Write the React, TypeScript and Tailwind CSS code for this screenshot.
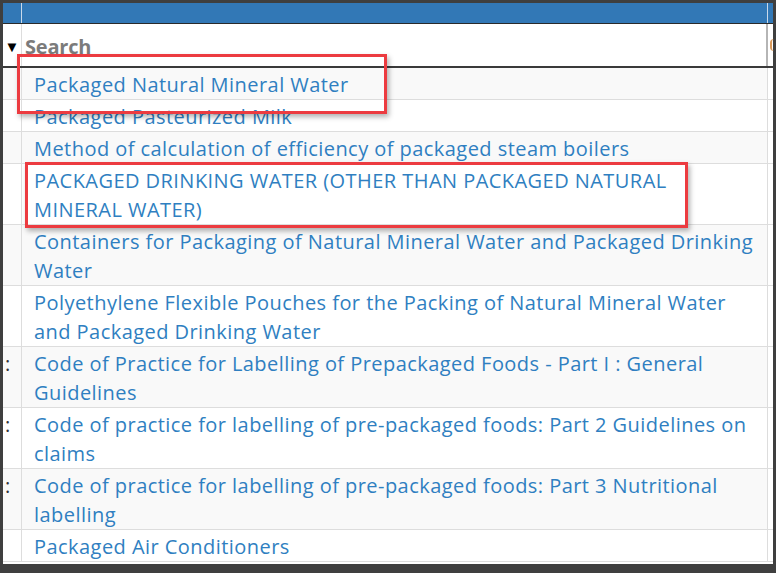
import React from "react";

type Row = { lines: string[]; left?: string };

const rows: Row[] = [
  { lines: ["Packaged Natural Mineral Water"] },
  { lines: ["Packaged Pasteurized Milk"] },
  { lines: ["Method of calculation of efficiency of packaged steam boilers"] },
  { lines: ["PACKAGED DRINKING WATER (OTHER THAN PACKAGED NATURAL", "MINERAL WATER)"] },
  { lines: ["Containers for Packaging of Natural Mineral Water and Packaged Drinking", "Water"] },
  { lines: ["Polyethylene Flexible Pouches for the Packing of Natural Mineral Water", "and Packaged Drinking Water"] },
  { lines: ["Code of Practice for Labelling of Prepackaged Foods - Part I : General", "Guidelines"], left: ":" },
  { lines: ["Code of practice for labelling of pre-packaged foods: Part 2 Guidelines on", "claims"], left: ":" },
  { lines: ["Code of practice for labelling of pre-packaged foods: Part 3 Nutritional", "labelling"], left: ":" },
  { lines: ["Packaged Air Conditioners"] },
];

export default function App() {
  return (
    <div
      className="relative w-[776px] h-[573px] bg-[#3f3f3f] pt-[3px] pl-[3px] pr-[3px] pb-[9px] overflow-hidden"
      style={{ fontFamily: "'Open Sans', Lato, sans-serif" }}
    >
      <div className="w-full h-full bg-white flex flex-col">
        {/* header */}
        <div className="flex h-[21px] bg-[#3278b6] border-b border-[#2a2a2a]">
          <div className="w-[19px] border-r border-[#c9d9ea]" />
          <div className="flex-1 border-r border-[#c9d9ea]" />
          <div className="w-[5px]" />
        </div>
        {/* search row */}
        <div className="flex h-[44px] bg-white border-b-2 border-[#3a3a3a]">
          <div className="w-[19px] border-r border-[#dddddd] flex items-center justify-center pt-[3px]">
            <span className="text-[15px] text-black leading-none">▼</span>
          </div>
          <div className="flex-1 border-r-2 border-[#b5b5b5] flex items-center pl-[3px] pt-[3px]">
            <span className="text-[20px] font-bold text-[#7b7b7b] leading-none tracking-[-0.2px]">Search</span>
          </div>
          <div className="w-[5px] relative">
            <span className="absolute left-[2px] top-[15px] w-[4px] h-[12px] border-l-2 border-[#d99a5b] rounded-l-full" />
          </div>
        </div>
        {/* body rows */}
        {rows.map((r, i) => (
          <div
            key={i}
            className={`flex border-b border-[#dddddd] ${i % 2 === 0 ? "bg-[#f9f9f9]" : "bg-white"}`}
          >
            <div className="w-[19px] border-r border-[#dddddd] text-[20px] leading-[29px] pt-[2px] pl-[2px] text-[#333]">
              {r.left ?? ""}
            </div>
            <div className="flex-1 border-r border-[#dddddd] pl-[12px] pt-[2px] text-[20px] leading-[29px] tracking-[0.45px] text-[#2f7fc1]">
              {r.lines.map((l, j) => (
                <div key={j} className="whitespace-nowrap">
                  {l}
                </div>
              ))}
            </div>
            <div className="w-[5px] bg-white" />
          </div>
        ))}
      </div>

      {/* highlight boxes */}
      <div className="absolute left-[17px] top-[54px] w-[370px] h-[60px] border-[3px] border-[#ec3b40] shadow-[2px_3px_5px_rgba(0,0,0,0.3)]" />
      <div className="absolute left-[25px] top-[162px] w-[663px] h-[66px] border-[3px] border-[#ec3b40] shadow-[2px_3px_5px_rgba(0,0,0,0.3)]" />
    </div>
  );
}
